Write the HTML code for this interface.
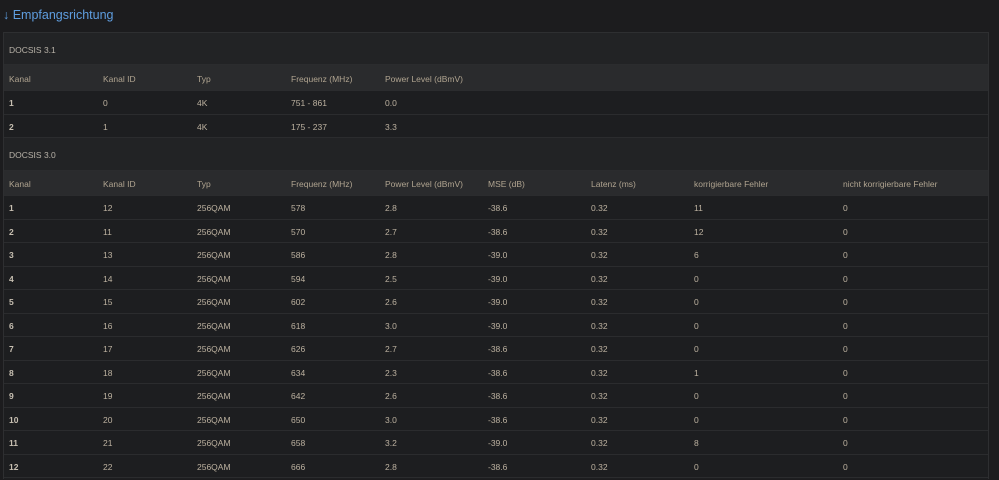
<!DOCTYPE html>
<html><head><meta charset="utf-8"><style>
html,body{margin:0;padding:0;background:#1c1c1e;width:999px;height:480px;overflow:hidden}
body{font-family:"Liberation Sans",sans-serif;color:#bdb2a0}
h1{position:absolute;left:3px;top:8px;margin:0;font-size:12.5px;font-weight:normal;color:#5f9ee0}
.panel{position:absolute;left:3px;top:32px;width:984px;height:446px;border:1px solid #2e2f31;border-bottom:none;background:#1d1e20;overflow:hidden}
table{border-collapse:collapse;table-layout:fixed;width:984px;font-size:8.5px}
td{padding:2px 0 0 5px;white-space:nowrap;border-bottom:1px solid #2b2c2e}
tr.sec td{background:#222325;height:29px;color:#b8b2a8}
tr.sec2 td{height:30px}
tr.hd td{background:#2a2b2d;height:22px;color:#b0a490}
tr.hd1 td{height:23px}
tr.r td{height:20.5px}
tr.r td:first-child{font-weight:bold;color:#c8c0b2}
</style></head><body>
<h1>↓ Empfangsrichtung</h1>
<div class="panel"><table>
<colgroup><col style="width:94px"><col style="width:94px"><col style="width:94px"><col style="width:94px"><col style="width:103px"><col style="width:103px"><col style="width:103px"><col style="width:149px"><col></colgroup>
<tr class="sec"><td colspan="9">DOCSIS 3.1</td></tr>
<tr class="hd hd1"><td>Kanal</td><td>Kanal ID</td><td>Typ</td><td>Frequenz (MHz)</td><td>Power Level (dBmV)</td><td></td><td></td><td></td><td></td></tr>
<tr class="r"><td>1</td><td>0</td><td>4K</td><td>751 - 861</td><td>0.0</td><td></td><td></td><td></td><td></td></tr>
<tr class="r"><td>2</td><td>1</td><td>4K</td><td>175 - 237</td><td>3.3</td><td></td><td></td><td></td><td></td></tr>
<tr class="sec sec2"><td colspan="9">DOCSIS 3.0</td></tr>
<tr class="hd"><td>Kanal</td><td>Kanal ID</td><td>Typ</td><td>Frequenz (MHz)</td><td>Power Level (dBmV)</td><td>MSE (dB)</td><td>Latenz (ms)</td><td>korrigierbare Fehler</td><td>nicht korrigierbare Fehler</td></tr>
<tr class="r"><td>1</td><td>12</td><td>256QAM</td><td>578</td><td>2.8</td><td>-38.6</td><td>0.32</td><td>11</td><td>0</td></tr>
<tr class="r"><td>2</td><td>11</td><td>256QAM</td><td>570</td><td>2.7</td><td>-38.6</td><td>0.32</td><td>12</td><td>0</td></tr>
<tr class="r"><td>3</td><td>13</td><td>256QAM</td><td>586</td><td>2.8</td><td>-39.0</td><td>0.32</td><td>6</td><td>0</td></tr>
<tr class="r"><td>4</td><td>14</td><td>256QAM</td><td>594</td><td>2.5</td><td>-39.0</td><td>0.32</td><td>0</td><td>0</td></tr>
<tr class="r"><td>5</td><td>15</td><td>256QAM</td><td>602</td><td>2.6</td><td>-39.0</td><td>0.32</td><td>0</td><td>0</td></tr>
<tr class="r"><td>6</td><td>16</td><td>256QAM</td><td>618</td><td>3.0</td><td>-39.0</td><td>0.32</td><td>0</td><td>0</td></tr>
<tr class="r"><td>7</td><td>17</td><td>256QAM</td><td>626</td><td>2.7</td><td>-38.6</td><td>0.32</td><td>0</td><td>0</td></tr>
<tr class="r"><td>8</td><td>18</td><td>256QAM</td><td>634</td><td>2.3</td><td>-38.6</td><td>0.32</td><td>1</td><td>0</td></tr>
<tr class="r"><td>9</td><td>19</td><td>256QAM</td><td>642</td><td>2.6</td><td>-38.6</td><td>0.32</td><td>0</td><td>0</td></tr>
<tr class="r"><td>10</td><td>20</td><td>256QAM</td><td>650</td><td>3.0</td><td>-38.6</td><td>0.32</td><td>0</td><td>0</td></tr>
<tr class="r"><td>11</td><td>21</td><td>256QAM</td><td>658</td><td>3.2</td><td>-39.0</td><td>0.32</td><td>8</td><td>0</td></tr>
<tr class="r"><td>12</td><td>22</td><td>256QAM</td><td>666</td><td>2.8</td><td>-38.6</td><td>0.32</td><td>0</td><td>0</td></tr>
</table></div>
</body></html>
